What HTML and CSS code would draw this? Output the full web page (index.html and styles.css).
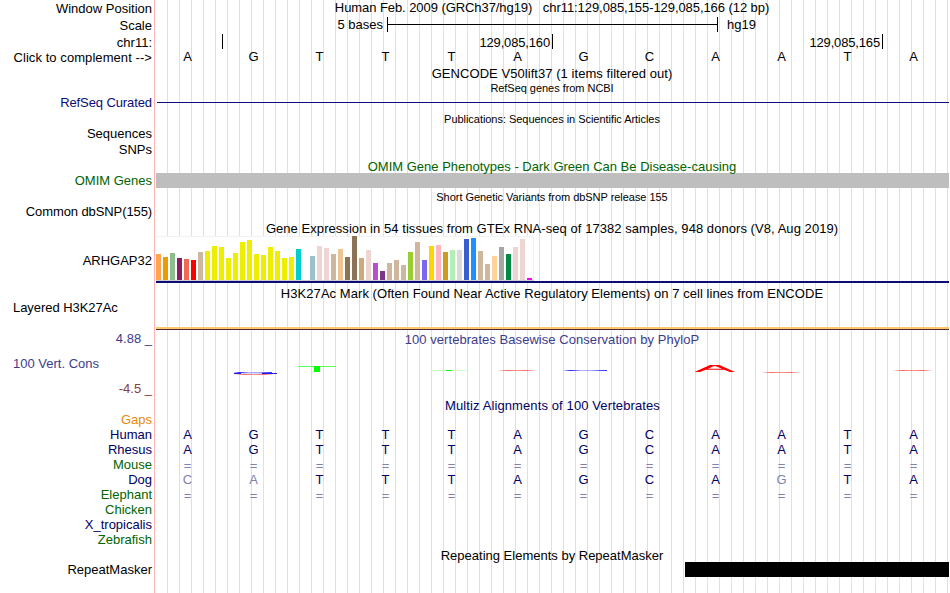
FILE: index.html
```html
<!DOCTYPE html>
<html lang="en">
<head>
<meta charset="utf-8">
<title>chr11:129,085,155-129,085,166</title>
<link rel="stylesheet" href="styles.css">
</head>
<body>
<main class="browser">
  <section class="track position">
    <div class="side">Window Position</div>
    <div class="data"><div class="title region">Human Feb. 2009 (GRCh37/hg19)&nbsp;&nbsp; chr11:129,085,155-129,085,166 (12 bp)</div></div>
  </section>
  <section class="track scale">
    <div class="side">Scale</div>
    <div class="data scale-row"><span class="scale-size">5 bases</span><div class="ruler"></div><span>hg19</span></div>
  </section>
  <section class="track coords">
    <div class="side">chr11:</div>
    <div class="data ticks"><span class="tick first"></span><span class="tick">129,085,160</span><span class="tick">129,085,165</span></div>
  </section>
  <section class="track sequence">
    <div class="side wide">Click to complement --&gt;</div>
    <div class="data"><div class="bases"><i>A</i><i>G</i><i>T</i><i>T</i><i>T</i><i>A</i><i>G</i><i>C</i><i>A</i><i>A</i><i>T</i><i>A</i></div></div>
  </section>
  <section class="track gencode">
    <div class="side"></div>
    <div class="data"><div class="title loose">GENCODE V50lift37 (1 items filtered out)</div></div>
  </section>
  <section class="track refseq">
    <div class="side low narrow navy">RefSeq Curated</div>
    <div class="data"><div class="title small">RefSeq genes from NCBI</div><div class="intron"></div></div>
  </section>
  <section class="track pubs">
    <div class="side low"><div>Sequences</div><div class="snps">SNPs</div></div>
    <div class="data"><div class="title small">Publications: Sequences in Scientific Articles</div></div>
  </section>
  <section class="track omim">
    <div class="side low green">OMIM Genes</div>
    <div class="data"><div class="title tight-box green">OMIM Gene Phenotypes - Dark Green Can Be Disease-causing</div><div class="omim-bar"></div></div>
  </section>
  <section class="track dbsnp">
    <div class="side low narrow">Common dbSNP(155)</div>
    <div class="data"><div class="title small">Short Genetic Variants from dbSNP release 155</div></div>
  </section>
  <section class="track gtex">
    <div class="side">ARHGAP32</div>
    <div class="data">
      <div class="title loose">Gene Expression in 54 tissues from GTEx RNA-seq of 17382 samples, 948 donors (V8, Aug 2019)</div>
      <div class="chart" id="chart"></div>
      <div class="gene-line"></div>
    </div>
  </section>
  <section class="track h3k27ac">
    <div class="side low left">Layered H3K27Ac</div>
    <div class="data"><div class="title loose">H3K27Ac Mark (Often Found Near Active Regulatory Elements) on 7 cell lines from ENCODE</div><div class="signal"></div></div>
  </section>
  <section class="track phylop">
    <div class="side"><div class="blue">4.88 _</div><div class="left blue">100 Vert. Cons</div><div class="maroon">-4.5 _</div></div>
    <div class="data">
      <div class="title loose blue">100 vertebrates Basewise Conservation by PhyloP</div>
      <svg class="logo" width="794" height="30" viewBox="155 355 794 30">
        <defs>
          <linearGradient id="red"><stop offset="0" stop-color="#f00" stop-opacity="0"/><stop offset=".25" stop-color="#f00" stop-opacity=".6"/><stop offset=".5" stop-color="#f00" stop-opacity=".4"/><stop offset=".75" stop-color="#f00" stop-opacity=".6"/><stop offset="1" stop-color="#f00" stop-opacity="0"/></linearGradient>
          <linearGradient id="blue"><stop offset="0" stop-color="#00f" stop-opacity=".2"/><stop offset=".15" stop-color="#00f" stop-opacity=".85"/><stop offset=".4" stop-color="#00f" stop-opacity=".3"/><stop offset=".65" stop-color="#00f" stop-opacity=".35"/><stop offset=".85" stop-color="#00f" stop-opacity=".7"/><stop offset="1" stop-color="#00f" stop-opacity=".8"/></linearGradient>
        </defs>
        <rect x="234" y="372" width="38" height="1" fill="url(#blue)"/>
        <path d="M236 373h28v1h-28z" fill="#d5d5ff"/>
        <path d="M234 373h7v1h-7zM262 373h15v1h-15z" fill="#2020ee"/>
        <rect x="234" y="374" width="40" height="1" fill="url(#red)"/>
        <path d="M298 366h38v1h-38z" fill="#5cff5c"/>
        <path d="M314 366h6v6h-6z" fill="#0f0"/>
        <path d="M430 370h37v1h-37z" fill="#cfc"/>
        <path d="M446 370h6v1h-6z" fill="#0f0"/>
        <rect x="497" y="370" width="40" height="1" fill="url(#red)"/>
        <rect x="564" y="370" width="43" height="1" fill="url(#blue)"/>
        <path d="M694.500 372L710 365H719.500L735 372H730L724 369.700H706L700 372ZM708 368.800H722L716 366.200H713.500Z" fill="#f00" fill-rule="evenodd"/>
        <rect x="761" y="372" width="40" height="1" fill="url(#red)"/>
        <rect x="892" y="370" width="41" height="1" fill="url(#red)"/>
      </svg>
    </div>
  </section>
  <section class="track multiz">
    <div class="side low species"><div class="orange">Gaps</div><div class="ink">Human</div><div class="ink">Rhesus</div><div class="green">Mouse</div><div class="ink">Dog</div><div class="green">Elephant</div><div class="green">Chicken</div><div class="ink">X_tropicalis</div><div class="green">Zebrafish</div></div>
    <div class="data ink">
      <div class="title multiz-title">Multiz Alignments of 100 Vertebrates</div>
      <div class="alignment">
        <div class="bases"><i>A</i><i>G</i><i>T</i><i>T</i><i>T</i><i>A</i><i>G</i><i>C</i><i>A</i><i>A</i><i>T</i><i>A</i></div>
        <div class="bases"><i>A</i><i>G</i><i>T</i><i>T</i><i>T</i><i>A</i><i>G</i><i>C</i><i>A</i><i>A</i><i>T</i><i>A</i></div>
        <div class="bases unaligned dim"><i>=</i><i>=</i><i>=</i><i>=</i><i>=</i><i>=</i><i>=</i><i>=</i><i>=</i><i>=</i><i>=</i><i>=</i></div>
        <div class="bases"><i class="dim">C</i><i class="dim">A</i><i>T</i><i>T</i><i>T</i><i>A</i><i>G</i><i>C</i><i>A</i><i class="dim">G</i><i>T</i><i>A</i></div>
        <div class="bases unaligned dim"><i>=</i><i>=</i><i>=</i><i>=</i><i>=</i><i>=</i><i>=</i><i>=</i><i>=</i><i>=</i><i>=</i><i>=</i></div>
      </div>
    </div>
  </section>
  <section class="track repeats">
    <div class="side low">RepeatMasker</div>
    <div class="data"><div class="title tight-box">Repeating Elements by RepeatMasker</div><div class="repeat-bar"></div></div>
  </section>
</main>
<script src="chart.js"></script>
</body>
</html>
```
FILE: styles.css
```css
* { box-sizing: border-box; }
body {
  margin: 0;
  background: #fff;
  color: #000;
  font: 13px/15px "Liberation Sans", Arial, sans-serif;
  overflow: hidden;
}
.browser {
  width: 949px;
  height: 593px;
  background:
    linear-gradient(#ffb4b4, #ffb4b4) 154px 0 / 1px 100% no-repeat,
    repeating-linear-gradient(90deg, #dcdcff 0 1px, transparent 1px 12px) 167px 0 / 782px 100% no-repeat;
}
.track { display: grid; grid-template-columns: 155px 794px; }
.side { padding: 1px 3px 0 12px; text-align: right; white-space: nowrap; }
.side.low { padding-top: 14px; }
.side.wide { letter-spacing: .07px; }
.side.narrow { letter-spacing: -.1px; }
.left { text-align: left; }
.side.left { padding-left: 13px; letter-spacing: -.05px; }
.side > .left { padding-left: 1px; }
.data { min-width: 0; }
.title { height: 15px; text-align: center; white-space: nowrap; }
.title.small { font-size: 11px; letter-spacing: -.04px; }
.title.loose { letter-spacing: .055px; }
.title.tight-box { height: 14px; }
.region { letter-spacing: -.07px; }
.multiz-title { letter-spacing: .11px; padding-left: 1px; }

.position, .scale, .sequence { height: 17px; }
.coords, .gencode { height: 15px; }
.refseq, .omim, .dbsnp { height: 31px; }
.pubs { height: 47px; }
.gtex { height: 65px; }
.h3k27ac { height: 46px; }
.phylop { height: 66px; }
.multiz { height: 150px; }
.repeats { height: 45px; }

.navy { color: #0c0c78; }
.ink { color: #000064; }
.green { color: #006400; }
.blue { color: #3c3c8c; }
.maroon { color: #8c3c3c; }
.orange { color: #e68a0a; }
.dim { color: #8080b1; }

.scale-row { display: grid; grid-template-columns: 228px 331px 1fr; column-gap: 4px; }
.scale-size { text-align: right; }
.scale-row > span:last-child { padding-left: 5px; }
.ruler {
  height: 15px;
  border: solid #000;
  border-width: 0 1px;
  background: linear-gradient(#000, #000) 0 7px / 100% 1px no-repeat;
}
.ticks { display: grid; grid-template-columns: 68px 330px 330px; }
.tick { height: 15px; padding: 1px 2px 0 0; border-right: 1px solid #000; text-align: right; letter-spacing: -.16px; }
.bases { display: grid; grid-template-columns: repeat(12, 66px); margin-left: -.5px; height: 15px; text-align: center; }
.bases i { font-style: normal; }
.unaligned { padding-top: 1px; }
.intron { height: 1px; margin: 6px 0 0 2px; background: #0c0c78; }
.snps { margin-top: 1px; }
.omim-bar { height: 15px; margin-left: 1px; background: #bebebe; }
.gtex .side { padding-top: 32px; }
.chart {
  display: flex;
  align-items: flex-end;
  gap: 2px;
  width: 378px;
  height: 45px;
  margin-left: 1px;
  border-bottom: 1px solid #ccc;
  background: #fff;
  box-shadow: inset 0 1px #f2f2f2, inset -1px 0 #f2f2f2;
}
.bar { width: 5px; }
.gene-line { height: 2px; margin-left: 1px; background: #0c0c78; }
.signal { height: 3px; margin: 26px 0 0 1px; background: linear-gradient(#ffc869 0 2px, #50283c 2px); }
.phylop .side { display: flex; flex-direction: column; gap: 10px; padding-top: 0; margin-top: -1px; }
.logo { display: block; margin-top: 8px; }
.alignment { margin-top: 14px; }
.repeat-bar { height: 15px; margin-left: 530px; background: #000; }
```
FILE: chart.js
```js
// Median expression per tissue: bar height in pixels and tissue colour.
const tissues = [
  [26, '#ffa54f'], [23, '#ee9a00'], [27, '#8fbc8f'], [22, '#8b1c62'], [21, '#ee6a50'], [20, '#ff0000'],
  [28, '#cdb79e'], [29, '#eeee00'], [34, '#eeee00'], [33, '#eeee00'], [22, '#eeee00'], [27, '#eeee00'],
  [38, '#eeee00'], [40, '#eeee00'], [26, '#eeee00'], [25, '#eeee00'], [33, '#eeee00'], [29, '#eeee00'],
  [22, '#eeee00'], [23, '#eeee00'], [31, '#00cdcd'], [0, '#ee82ee'], [24, '#9ac0cd'], [34, '#eed5d2'],
  [32, '#eed5d2'], [26, '#cdb79e'], [31, '#eec591'], [23, '#8b7355'], [44, '#8b7355'], [22, '#cdaa7d'],
  [30, '#eed5d2'], [17, '#b452cd'], [9, '#7a378b'], [17, '#cdb79e'], [20, '#cdb79e'], [15, '#cdb79e'],
  [28, '#9acd32'], [38, '#cdb79e'], [20, '#7a67ee'], [34, '#ffd700'], [35, '#ffb6c1'], [28, '#cd9b1d'],
  [30, '#b4eeb4'], [30, '#d9d9d9'], [41, '#3a5fcd'], [42, '#1e90ff'], [29, '#cdb79e'], [16, '#cdb79e'],
  [24, '#ffd39b'], [33, '#a6a6a6'], [26, '#008b45'], [33, '#eed5d2'], [41, '#eed5d2'], [2, '#ff00ff']
];
const chart = document.getElementById('chart');
for (const [height, color] of tissues) {
  const bar = document.createElement('div');
  bar.className = 'bar';
  bar.style.height = height + 'px';
  bar.style.background = color;
  chart.append(bar);
}
```
